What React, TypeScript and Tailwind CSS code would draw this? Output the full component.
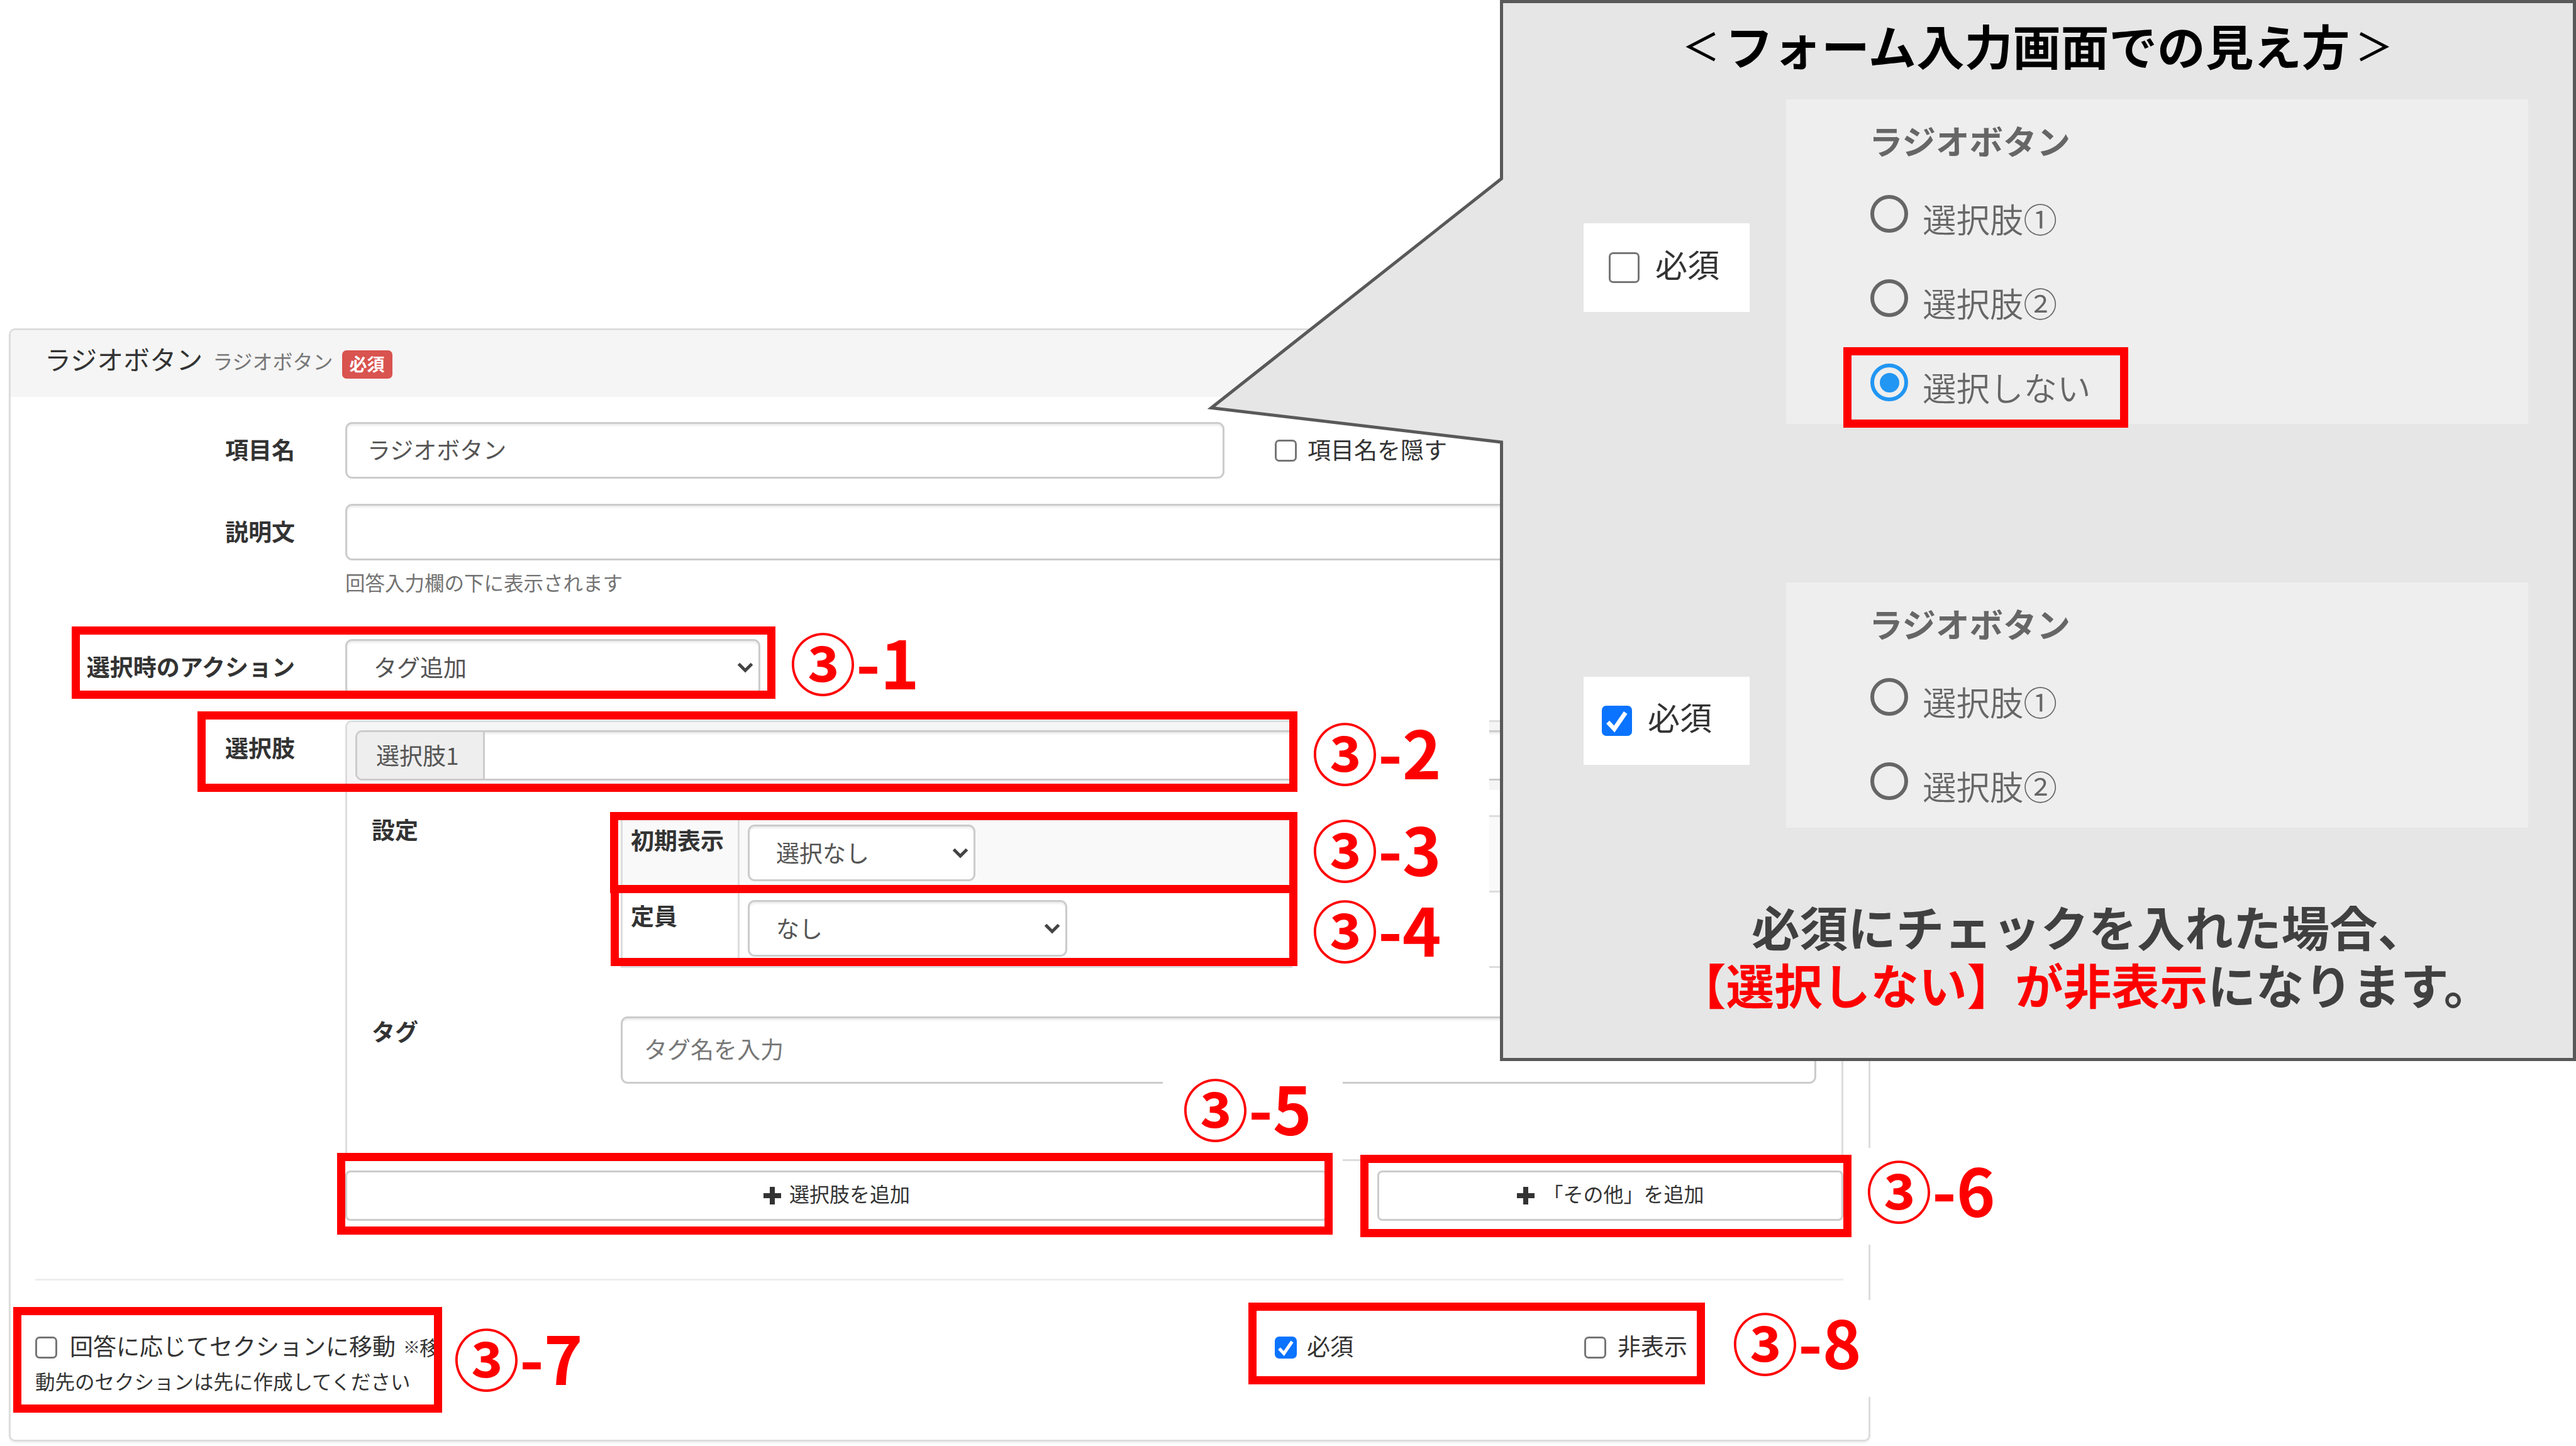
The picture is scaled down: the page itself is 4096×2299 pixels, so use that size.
import type { ReactNode } from 'react';
import clsx from 'clsx';

const input = 'bg-white border-[3px] border-[#ccc] rounded-[11px] shadow-[inset_0_3px_3px_rgba(0,0,0,0.075)]';

// left/top/size of every highlighted area
const frames = [
  'left-[114px] top-[996px] w-[1119px] h-[115px]',
  'left-[314px] top-[1131px] w-[1749px] h-[128px]',
  'left-[970px] top-[1291px] w-[1093px] h-[129px]',
  'left-[971px] top-[1407px] w-[1092px] h-[129px]',
  'left-[536px] top-[1833px] w-[1583px] h-[130px]',
  'left-[2163px] top-[1836px] w-[781px] h-[131px]',
  'left-[21px] top-[2078px] w-[682px] h-[168px]',
  'left-[1985px] top-[2071px] w-[726px] h-[130px]',
];

const callouts = [
  { n: 1, pos: 'left-[1225px] top-[986px] w-[286px]' },
  { n: 2, pos: 'left-[2055px] top-[1129px] w-[313px]' },
  { n: 3, pos: 'left-[2055px] top-[1283px] w-[313px]' },
  { n: 4, pos: 'left-[2055px] top-[1411px] w-[313px]' },
  { n: 5, pos: 'left-[1849px] top-[1695px] w-[286px]' },
  { n: 6, pos: 'left-[2936px] top-[1825px] w-[286px]' },
  { n: 7, pos: 'left-[690px] top-[2092px] w-[286px]' },
  { n: 8, pos: 'left-[2723px] top-[2067px] w-[286px]' },
];

function Checkbox({ checked = false, className }: { checked?: boolean; className?: string }) {
  return (
    <span
      className={clsx(
        'shrink-0 flex items-center justify-center rounded-[7px]',
        checked ? 'bg-[#0a73ff]' : 'bg-white border-[3px] border-[#767676]',
        className ?? 'size-[35px]'
      )}
    >
      {checked && (
        <svg className="w-full h-full" viewBox="0 0 35 35" fill="none" stroke="#fff" strokeWidth="5">
          <path d="M7 19l7.500 8L27.500 8" />
        </svg>
      )}
    </span>
  );
}

function Select({ children, className }: { children: ReactNode; className: string }) {
  return (
    <div className={clsx(input, 'h-[90px] flex items-center justify-between pl-[42px] pr-[8px] text-[#555]', className)}>
      <span className="-mt-[2px]">{children}</span>
      <svg className="w-[26px] h-[18px]" viewBox="0 0 26 18" fill="none" stroke="#444" strokeWidth="5">
        <path d="M2.500 3.500L13 14L23.500 3.500" />
      </svg>
    </div>
  );
}

function Plus() {
  return (
    <svg className="size-[30px]" viewBox="0 0 30 30" fill="#333">
      <path d="M11 1h8v10h10v8H19v10h-8V19H1v-8h10z" />
    </svg>
  );
}

function Row({ label, children, className }: { label: string; children: ReactNode; className?: string }) {
  return (
    <div className={clsx('flex items-start', className)}>
      <div className="w-[452px] mr-[80px] shrink-0 text-right font-bold leading-[86px]">{label}</div>
      {children}
    </div>
  );
}

function Radio({ label, checked = false }: { label: string; checked?: boolean }) {
  return (
    <div className="h-[134px] flex items-center gap-[23px] pl-[134px]">
      <span
        className={clsx(
          'size-[60px] rounded-full border-[6px] flex items-center justify-center',
          checked ? 'border-[#2196f3]' : 'border-[#666]'
        )}
      >
        {checked && <span className="size-[31px] rounded-full bg-[#2196f3]"></span>}
      </span>
      <span className="mt-[14px] font-[350]">{label}</span>
    </div>
  );
}

function Preview({ options, className }: { options: string[]; className: string }) {
  return (
    <div className={clsx('ml-[58px] w-[1180px] bg-[#eee] text-[#666] text-[53.500px] leading-[64px]', className)}>
      <div className="pt-[33px] pl-[132px] mb-[18px] font-bold">ラジオボタン</div>
      {options.map((o) => (
        <Radio key={o} label={o} checked={o === '選択しない'} />
      ))}
    </div>
  );
}

function FormPanel() {
  return (
    <div className="mt-[522px] ml-[14px] w-[2960px] h-[1770px] shrink-0 border-[3px] border-[#ddd] rounded-[10px] bg-white text-[37px] leading-[40px] shadow-[0_3px_3px_rgba(0,0,0,0.05)]">
      <div className="h-[106px] flex items-start bg-[#f5f5f5] rounded-t-[8px] pl-[54px]">
        <span className="text-[42px] leading-[90px]">ラジオボタン</span>
        <span className="ml-[16px] text-[32px] leading-[97px] text-[#777]">ラジオボタン</span>
        <span className="ml-[14px] mt-[32px] w-[80px] h-[45px] rounded-[7px] bg-[#d9534f] text-white text-center text-[28px] leading-[42px] font-bold">
          必須
        </span>
      </div>

      <Row label="項目名" className="pt-[40px]">
        <div className={clsx(input, 'w-[1398px] h-[90px] pl-[32px] leading-[80px] text-[#555]')}>ラジオボタン</div>
        <label className="ml-[80px] h-[90px] flex items-center gap-[17px]">
          <Checkbox />
          <span className="-mt-[4px]">項目名を隠す</span>
        </label>
      </Row>

      <Row label="説明文" className="mt-[40px]">
        <div>
          <div className={clsx(input, 'w-[2382px] h-[90px]')}></div>
          <div className="h-[85px] text-[31.500px] leading-[68px] text-[#737373]">回答入力欄の下に表示されます</div>
        </div>
      </Row>

      <Row label="選択時のアクション" className="mt-[40px]">
        <Select className="w-[660px]">タグ追加</Select>
      </Row>

      <Row label="選択肢" className="mt-[39px]">
        <div className="w-[2382px] h-[701px] border-[3px] border-[#ddd] rounded-[11px]">
          <div className="h-[108px] bg-[#f5f5f5] rounded-t-[8px] pt-[13px] px-[13px]">
            <div className={clsx(input, 'h-[80px] flex overflow-hidden')}>
              <span className="w-[203px] bg-[#eee] border-r-[3px] border-[#ccc] pl-[30px] leading-[72px] text-[#555]">
                選択肢1
              </span>
            </div>
          </div>
          <div className="flex pl-[39px] pt-[40px]">
            <div className="w-[396px] shrink-0 font-bold leading-[45px]">設定</div>
            <div className="w-[1900px] border-l-[3px] border-t-[3px] border-[#ddd]">
              <div className="h-[120px] flex border-b-[3px] border-[#ddd] bg-[#f9f9f9]">
                <div className="w-[186px] pl-[13px] border-r-[3px] border-[#ddd] font-bold leading-[73px]">初期表示</div>
                <Select className="ml-[13px] mt-[12px] w-[362px]">選択なし</Select>
              </div>
              <div className="h-[120px] flex border-b-[3px] border-[#ddd]">
                <div className="w-[186px] pl-[13px] border-r-[3px] border-[#ddd] font-bold leading-[73px]">定員</div>
                <Select className="ml-[13px] mt-[12px] w-[508px]">なし</Select>
              </div>
            </div>
          </div>
          <div className="flex pl-[39px] pt-[77px]">
            <div className="w-[396px] shrink-0 font-bold leading-[47px]">タグ</div>
            <div className={clsx(input, 'w-[1901px] h-[107px] pl-[34px] leading-[97px] text-[#777]')}>タグ名を入力</div>
          </div>
        </div>
      </Row>

      <div className="mt-[15px] ml-[532px] w-[2382px] flex justify-between text-[32px]">
        <div className="w-[1562px] h-[80px] flex items-center justify-center gap-[12px] border-[3px] border-[#ccc] rounded-[8px]">
          <Plus />
          <span className="-mt-[8px]">選択肢を追加</span>
        </div>
        <div className="w-[741px] h-[80px] flex items-center justify-center gap-[12px] border-[3px] border-[#ccc] rounded-[8px]">
          <Plus />
          <span className="-mt-[8px]">「その他」を追加</span>
        </div>
      </div>

      <div className="mt-[92px] ml-[39px] w-[2875px] h-[3px] bg-[#eee]"></div>

      <div className="mt-[79px] pl-[39px] flex items-start">
        <div className="w-[1971px]">
          <div className="w-[670px] h-[54px] whitespace-nowrap flex items-center">
            <Checkbox />
            <span className="ml-[20px] -mt-[6px]">回答に応じてセクションに移動</span>
            <span className="ml-[12px] -mt-[2px] text-[27px]">※</span>
            <span className="-ml-[1px] -mt-[2px] text-[31.500px]">移</span>
          </div>
          <div className="text-[31.500px] leading-[53px]">動先のセクションは先に作成してください</div>
        </div>
        <label className="w-[492px] h-[54px] flex items-center gap-[16px]">
          <Checkbox checked />
          <span className="-mt-[6px]">必須</span>
        </label>
        <label className="h-[54px] flex items-center gap-[18px]">
          <Checkbox />
          <span className="-mt-[6px]">非表示</span>
        </label>
      </div>
    </div>
  );
}

function PreviewBalloon() {
  return (
    <>
      <svg className="absolute left-0 top-0 w-[4096px] h-[2299px]" viewBox="0 0 4096 2299">
        <path
          d="M2387.500 2.500H4093.500V1684.500H2387.500V703L1926 648.500L2387.500 284Z"
          fill="#e6e6e6"
          stroke="#595959"
          strokeWidth="5"
        />
      </svg>
      <div className="absolute left-[2388px] top-0 w-[1706px] h-[1685px]">
        <div className="h-[158px] pl-[278px] flex text-[76.600px] leading-[142px] font-bold text-black whitespace-nowrap">
          <span className="w-[77px] text-center text-[60px] font-medium">＜</span>
          <span>フォーム入力画面での見え方</span>
          <span className="w-[77px] text-center text-[60px] font-medium">＞</span>
        </div>
        <div className="flex items-start">
          <div className="ml-[130px] mt-[197px] w-[264px] h-[141px] bg-white flex items-center pl-[40px] gap-[25px] text-[51px]">
            <Checkbox className="size-[49px]" />
            <span className="-mt-[12px]">必須</span>
          </div>
          <Preview className="h-[516px]" options={['選択肢①', '選択肢②', '選択しない']} />
        </div>
        <div className="mt-[252px] flex items-start">
          <div className="ml-[130px] mt-[150px] w-[264px] h-[140px] bg-white flex items-center pl-[29px] gap-[25px] text-[51px]">
            <Checkbox checked className="size-[48px]" />
            <span className="-mt-[14px]">必須</span>
          </div>
          <Preview className="h-[390px]" options={['選択肢①', '選択肢②']} />
        </div>
        <div className="mt-[110px] text-[76.600px] leading-[92px] font-bold text-[#404040] whitespace-nowrap">
          <div className="pl-[397px]">必須にチェックを入れた場合、</div>
          <div className="pl-[280px]">
            <span className="text-[#f00]">【選択しない】が非表示</span>になります。
          </div>
        </div>
      </div>
      <div className="absolute left-[2931px] top-[552px] w-[453px] h-[128px] border-[13px] border-[#f00]"></div>
    </>
  );
}

export default function App() {
  return (
    <main
      lang="ja"
      className="relative w-[4096px] h-[2299px] overflow-hidden bg-white flex flex-col text-[#333] font-['Noto_Sans_CJK_JP',sans-serif]"
    >
      <FormPanel />
      {callouts.map((c) => (
        <div
          key={c.n}
          className={clsx('absolute h-[154px] pl-[31px] bg-white text-[#f00] text-[105px] leading-[129px] font-bold whitespace-nowrap', c.pos)}
        >
          ③-{c.n}
        </div>
      ))}
      {frames.map((f) => (
        <div key={f} className={clsx('absolute border-[13px] border-[#f00]', f)}></div>
      ))}
      <PreviewBalloon />
    </main>
  );
}
